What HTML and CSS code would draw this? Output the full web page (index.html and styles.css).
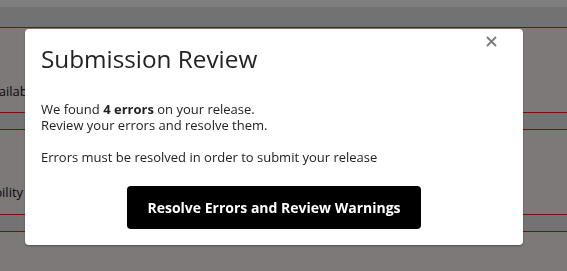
FILE: index.html
```html
<!DOCTYPE html>
<html lang="en">
<head>
<meta charset="utf-8">
<title>Submission Review</title>
<link rel="stylesheet" href="styles.css">
</head>
<body>
<div class="page">
  <div class="topbar"></div>
  <div class="subbar"></div>
  <div class="section"><span class="label label-a">Availability</span></div>
  <div class="strip"></div>
  <div class="section"><span class="label label-b">Compatibility</span></div>
  <div class="strip"></div>
  <div class="section section-last"></div>
</div>
<div class="overlay"></div>
<div class="modal" role="dialog">
  <button class="close" aria-label="Close">
    <svg width="11" height="11" viewBox="0 0 11 11"><path d="M1 1L10 10M10 1L1 10" stroke="#7a7a7a" stroke-width="1.8" fill="none"/></svg>
  </button>
  <h2 class="title">Submission Review</h2>
  <p class="text">We found <strong>4 errors</strong> on your release.<br>Review your errors and resolve them.</p>
  <p class="text">Errors must be resolved in order to submit your release</p>
  <div class="actions">
    <button class="primary">Resolve Errors and Review Warnings</button>
  </div>
</div>
</body>
</html>
```

FILE: styles.css
```css
html, body {
  margin: 0;
  padding: 0;
  height: 100%;
  overflow: hidden;
}
body {
  font-family: "Open Sans", "Liberation Sans", sans-serif;
  color: #222;
  background: #fcf3f3;
}
.page {
  display: flex;
  flex-direction: column;
}
.topbar {
  height: 7px;
  background: #ffffff;
}
.subbar {
  height: 20px;
  background: #e4e4e4;
  border-bottom: 1px solid #f21e1e;
}
.section {
  height: 84px;
  background: #fcf3f3;
  display: flex;
  align-items: center;
  font-size: 13px;
}
.section-last {
  height: 39px;
}
.label {
  color: #111;
}
.label-a {
  margin-left: -16px;
  margin-top: 42px;
}
.label-b {
  margin-left: -57px;
  margin-top: 40px;
}
.strip {
  height: 16px;
  background: #e6e6e6;
  border-top: 1px solid #f21e1e;
  border-bottom: 1px solid #f21e1e;
}
.overlay {
  position: fixed;
  inset: 0;
  background: rgba(0, 0, 0, 0.5);
}
.modal {
  position: absolute;
  top: 29px;
  left: 25px;
  width: 498px;
  height: 216px;
  box-sizing: border-box;
  background: #fff;
  border-radius: 4px;
  box-shadow: 0 1px 2px rgba(0, 0, 0, 0.35);
  padding: 14px 16px 0 16px;
}
.close {
  position: absolute;
  top: 7px;
  right: 26px;
  width: 11px;
  height: 11px;
  padding: 0;
  border: 0;
  background: none;
  display: block;
}
.close svg {
  display: block;
}
.title {
  margin: 0;
  font-size: 24.3px;
  font-weight: 400;
  line-height: 32px;
  color: #222;
}
.text {
  margin: 26px 0 0 0;
  font-size: 13px;
  line-height: 16px;
  color: #222;
}
.text + .text {
  margin-top: 16px;
}
.text strong {
  font-weight: 700;
}
.actions {
  display: flex;
  justify-content: center;
  margin-top: 21px;
}
.primary {
  width: 294px;
  height: 43px;
  background: #000;
  color: #fff;
  border: 0;
  border-radius: 4px;
  font-family: "Open Sans", "Liberation Sans", sans-serif;
  font-weight: 700;
  font-size: 14px;
  padding: 0;
}
```
